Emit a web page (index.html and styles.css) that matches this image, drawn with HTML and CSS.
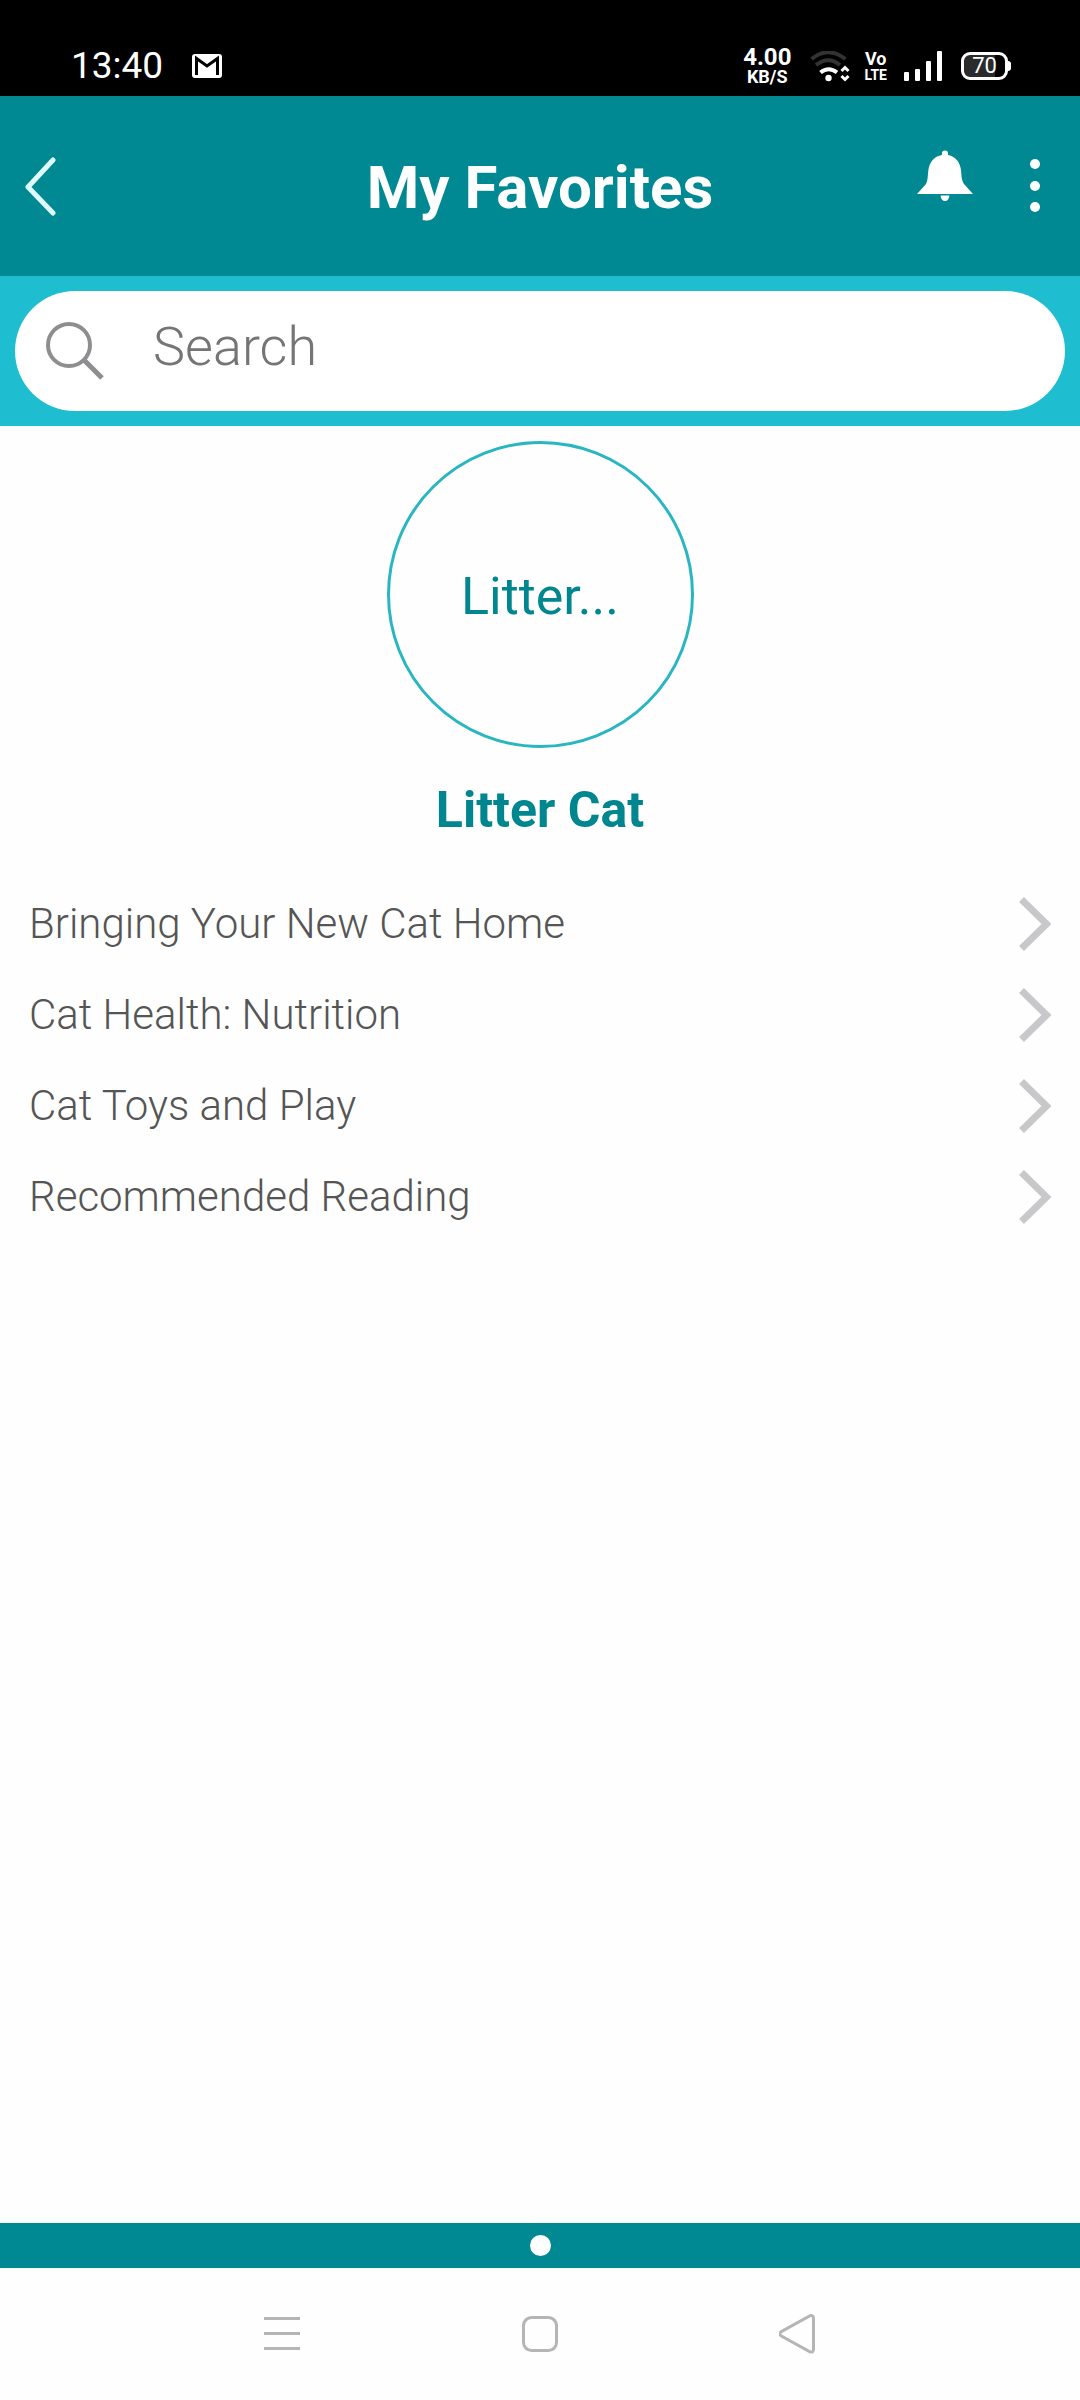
FILE: index.html
```html
<!DOCTYPE html>
<html lang="en">
<head>
<meta charset="utf-8">
<meta name="viewport" content="width=device-width, initial-scale=1">
<title>My Favorites</title>
<link rel="stylesheet" href="styles.css">
</head>
<body>
<div class="status">
  <time class="clock">13:40</time>
  <svg class="mail" width="30" height="24" viewBox="0 0 30 24" aria-hidden="true">
    <rect width="30" height="24" rx="3" fill="#fff"/>
    <path d="M4.500 21V4.500L15 12l10.500-7.500V21" fill="none" stroke="#000" stroke-width="3"/>
  </svg>
  <div class="speed"><span class="speed-value">4.00</span><span class="speed-unit">KB/S</span></div>
  <svg class="wifi" width="40" height="31" viewBox="0 0 40 31" fill="none" aria-hidden="true">
    <path d="M1.500 8Q18-5.500 35.500 8M6 14q12.500-9.500 24 0" stroke="#333" stroke-width="4"/>
    <path d="M10.500 21.500q8-6.500 16.500 0" stroke="#fff" stroke-width="4"/>
    <circle cx="18.500" cy="27" r="3.200" fill="#fff"/>
    <path d="M31.500 20l3.500-3.500 3.500 3.500M31.500 25l3.500 3.500 3.500-3.500" stroke="#fff" stroke-width="3"/>
  </svg>
  <div class="volte"><span class="volte-top">Vo</span><span>LTE</span></div>
  <svg class="signal" width="38" height="30" viewBox="0 0 38 30" fill="#fff" aria-hidden="true">
    <rect y="21" width="5" height="9" rx="1"/>
    <rect x="11" y="18" width="5" height="12" rx="1"/>
    <rect x="22" y="10" width="5" height="20" rx="1"/>
    <rect x="33" width="5" height="30" rx="1"/>
  </svg>
  <div class="battery">70</div>
</div>

<header class="header">
  <button class="icon-button back" aria-label="Back">
    <svg width="34" height="60" viewBox="0 0 34 60" fill="none" stroke="#dffbff" stroke-width="5" stroke-linecap="round" stroke-linejoin="round"><path d="M29 4L4 31l25 26"/></svg>
  </button>
  <h1 class="title">My Favorites</h1>
  <div class="actions">
    <button class="icon-button bell" aria-label="Notifications">
      <svg width="56" height="52" viewBox="0 0 56 52" fill="#fff"><path d="M25 5V3.500a3 3 0 0 1 6 0V5c8 1.500 12 7.500 13 15 .7 7 .5 10 3 14l9 10H0l9-10c2-4 1.600-8 2.400-14C12.500 12 17 6.500 25 5z"/><path d="M23.500 45.500h9c-.4 3.500-2 5.500-4.500 5.500s-4.200-2-4.500-5.500z"/></svg>
    </button>
    <button class="icon-button" aria-label="More options">
      <svg width="10" height="54" viewBox="0 0 10 54" fill="#fff"><circle cx="5" cy="5" r="5"/><circle cx="5" cy="27" r="5"/><circle cx="5" cy="48" r="5"/></svg>
    </button>
  </div>
</header>

<form class="search" role="search">
  <label class="search-field">
    <svg width="60" height="60" viewBox="0 0 60 60" fill="none" stroke="#8e8e91" aria-hidden="true"><circle cx="24" cy="24" r="21" stroke-width="4"/><path d="M39 39l18 18" stroke-width="5"/></svg>
    <input class="search-input" type="search" placeholder="Search" aria-label="Search">
  </label>
</form>

<main class="content">
  <div class="avatar">Litter...</div>
  <h2 class="name">Litter Cat</h2>
  <ul class="list">
    <li><a class="row" href="#home">Bringing Your New Cat Home<svg class="chevron" viewBox="0 0 32 54"><path d="M2.500 2.500L27.500 27l-25 24.500"/></svg></a></li>
    <li><a class="row" href="#nutrition">Cat Health: Nutrition<svg class="chevron" viewBox="0 0 32 54"><path d="M2.500 2.500L27.500 27l-25 24.500"/></svg></a></li>
    <li><a class="row" href="#play">Cat Toys and Play<svg class="chevron" viewBox="0 0 32 54"><path d="M2.500 2.500L27.500 27l-25 24.500"/></svg></a></li>
    <li><a class="row" href="#reading">Recommended Reading<svg class="chevron" viewBox="0 0 32 54"><path d="M2.500 2.500L27.500 27l-25 24.500"/></svg></a></li>
  </ul>
</main>

<div class="pager"><span class="pager-dot"></span></div>

<nav class="system-nav" aria-label="System">
  <button class="icon-button" aria-label="Recent apps"><svg width="40" height="42" viewBox="0 0 40 42"><path d="M3 5.500h36M3 20.500h36M3 35.500h36"/></svg></button>
  <button class="icon-button" aria-label="Home"><svg width="40" height="42" viewBox="0 0 40 42"><rect x="3.500" y="4.500" width="33" height="33" rx="8"/></svg></button>
  <button class="icon-button" aria-label="Go back"><svg width="40" height="42" viewBox="0 0 40 42"><path d="M31 2.800L2.300 18.600q-3 2.200 0 4.400L31 38.800q3.500 1.200 3.500-2.500v-31q0-3.500-3.500-2.500z"/></svg></button>
</nav>
</body>
</html>
```
FILE: styles.css
```css
* {
  box-sizing: border-box;
}

body {
  margin: 0;
  min-height: 100vh;
  display: flex;
  flex-direction: column;
  background: #fefefe;
  font-family: Roboto, sans-serif;
}

svg {
  display: block;
  flex: none;
}

.icon-button {
  display: block;
  padding: 0;
  border: 0;
  background: none;
}

/* Device status bar */
.status {
  display: flex;
  align-items: center;
  height: 96px;
  padding: 36px 72px 0 71px;
  background: #000;
  color: #fff;
}

.clock {
  font-size: 37px;
  line-height: 40px;
}

.mail {
  margin-left: 29px;
}

.speed {
  display: flex;
  flex-direction: column;
  align-items: center;
  margin-left: auto;
  font-weight: 700;
}

.speed-value {
  font-size: 24px;
  line-height: 22px;
}

.speed-unit {
  font-size: 18px;
  line-height: 18px;
}

.wifi {
  margin-left: 19px;
}

.volte {
  display: flex;
  flex-direction: column;
  align-items: center;
  margin-left: 14px;
  font-size: 14px;
  line-height: 14px;
  font-weight: 700;
}

.volte-top {
  font-size: 18px;
  line-height: 18px;
}

.signal {
  margin-left: 17px;
}

.battery {
  position: relative;
  width: 47px;
  height: 28px;
  margin-left: 19px;
  border: 3px solid #fff;
  border-radius: 9px;
  background: linear-gradient(90deg, #2b2b2b 75%, #000 75%);
  font-size: 22px;
  line-height: 22px;
  font-weight: 400;
  text-align: center;
}

.battery::after {
  content: "";
  position: absolute;
  top: 6px;
  right: -6px;
  width: 3px;
  height: 10px;
  border-radius: 0 3px 3px 0;
  background: #fff;
}

/* App header */
.header {
  display: grid;
  grid-template-columns: 1fr auto 1fr;
  align-items: center;
  height: 180px;
  padding: 0 40px 0 24px;
  background: #008893;
  color: #fff;
}

.title {
  margin: 0;
  padding: 4px 0 0 16px;
  font-size: 60px;
  line-height: 72px;
  font-weight: 700;
}

.actions {
  display: flex;
  align-items: center;
  justify-content: flex-end;
  gap: 57px;
}

.bell {
  padding-bottom: 20px;
}

/* Search */
.search {
  padding: 15px;
  background: #1ebdcf;
}

.search-field {
  display: flex;
  align-items: center;
  gap: 48px;
  height: 120px;
  padding: 0 30px;
  border-radius: 60px;
  background: #fff;
}

.search-input {
  flex: 1;
  min-width: 0;
  padding: 0 0 8px;
  border: 0;
  outline: 0;
  background: none;
  color: #666;
  font: 300 54px/64px Roboto, sans-serif;
}

.search-input::placeholder {
  color: #757575;
  opacity: 1;
}

/* Favorite */
.content {
  flex: 1;
  padding-top: 15px;
}

.avatar {
  display: grid;
  place-items: center;
  width: 307px;
  height: 307px;
  margin: 0 auto;
  padding-top: 3px;
  border: 3px solid #2ab6c1;
  border-radius: 50%;
  color: #00868e;
  font-size: 52px;
}

.name {
  margin: 0;
  padding: 32px 0 38px;
  color: #00868e;
  font-size: 50px;
  line-height: 60px;
  font-weight: 700;
  text-align: center;
}

.list {
  margin: 0;
  padding: 0;
  list-style: none;
}

.row {
  display: flex;
  align-items: center;
  justify-content: space-between;
  height: 91px;
  padding: 0 29px;
  color: #555;
  font-size: 42px;
  font-weight: 300;
  text-decoration: none;
}

.chevron {
  width: 32px;
  height: 54px;
  fill: none;
  stroke: #c8c8cb;
  stroke-width: 7;
}

/* Page indicator */
.pager {
  display: grid;
  place-items: center;
  height: 45px;
  background: #008893;
}

.pager-dot {
  width: 21px;
  height: 21px;
  border-radius: 50%;
  background: #fff;
}

/* System navigation */
.system-nav {
  display: grid;
  grid-template-columns: repeat(3, 1fr);
  place-items: center;
  height: 132px;
  padding: 0 14%;
  fill: none;
  stroke: #b5b5b5;
  stroke-width: 3;
}
```
